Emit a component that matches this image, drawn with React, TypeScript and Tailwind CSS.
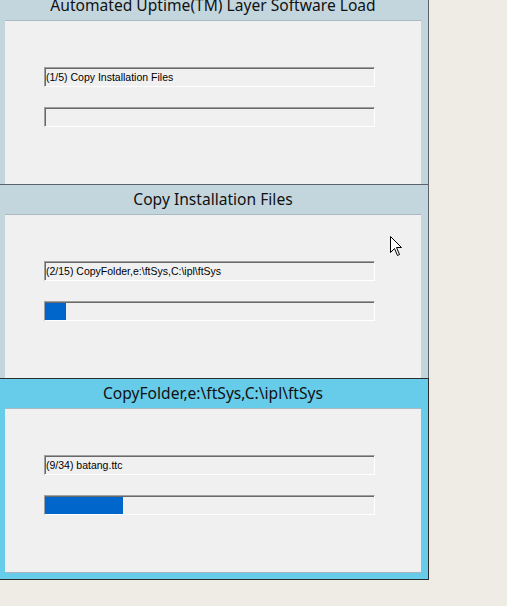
import React from 'react';

type Step = {
  title: string;
  status: string;
  fill: number;
  active?: boolean;
};

const steps: Step[] = [
  { title: 'Automated Uptime(TM) Layer Software Load', status: '(1/5) Copy Installation Files', fill: 0 },
  { title: 'Copy Installation Files', status: '(2/15) CopyFolder,e:\\ftSys,C:\\ipl\\ftSys', fill: 21 },
  { title: 'CopyFolder,e:\\ftSys,C:\\ipl\\ftSys', status: '(9/34) batang.ttc', fill: 78, active: true },
];

const Sunken: React.FC<{ children?: React.ReactNode }> = ({ children }) => (
  <div className="ml-[39px] w-[331px] h-[20px] border border-t-[#a0a0a0] border-l-[#a0a0a0] border-b-white border-r-white shadow-[inset_1px_1px_0_#696969] bg-[#f0f0f0] flex items-center">
    {children}
  </div>
);

const LoadWindow: React.FC<{ step: Step; first?: boolean }> = ({ step, first }) => (
  <div
    className={
      'w-[429px] border-r pl-[5px] pr-[7px] ' +
      (step.active
        ? 'bg-[#67cbea] border-[#2d2d2d] border-t border-b pb-[6px]'
        : 'bg-[#c3d6de] border-[#5d636b] ' + (first ? '' : 'border-t'))
    }
  >
    <div
      className="h-[29px] flex items-center justify-center text-[15.6px] text-[#111]"
      style={{ fontFamily: '"Noto Sans", "Open Sans", sans-serif' }}
    >
      {step.title}
    </div>
    <div
      className={
        'bg-[#f0f0f0] pt-[46px] ' +
        (step.active ? 'h-[165px] border-b border-[#a8b4bc]' : 'h-[164px]') +
        ' border-t border-t-[#a9bac4]'
      }
      style={{ fontFamily: '"Liberation Sans", Arial, sans-serif' }}
    >
      <Sunken>
        <span className="pl-[1px] text-[10.5px] text-black leading-none whitespace-nowrap">{step.status}</span>
      </Sunken>
      <div className="h-[20px]" />
      <Sunken>
        <div className="h-full pt-[1px]">
          {step.fill > 0 && <div className="h-full bg-[#0066cc]" style={{ width: step.fill }} />}
        </div>
      </Sunken>
    </div>
  </div>
);

export default function App() {
  return (
    <div className="relative w-[507px] h-[606px] overflow-hidden bg-[#efebe5]">
      <div className="-mt-[9px]">
        {steps.map((s, i) => (
          <LoadWindow key={i} step={s} first={i === 0} />
        ))}
      </div>
      {/* mouse pointer */}
      <svg className="absolute left-[390px] top-[236px]" width="13" height="21" viewBox="0 0 13 21">
        <path d="M0.5 0.5 L0.5 16.5 L4.5 12.5 L7.5 19.5 L9.5 18.5 L6.5 11.5 L11.5 11.5 Z" fill="#fff" stroke="#000" strokeWidth="1" />
      </svg>
    </div>
  );
}
